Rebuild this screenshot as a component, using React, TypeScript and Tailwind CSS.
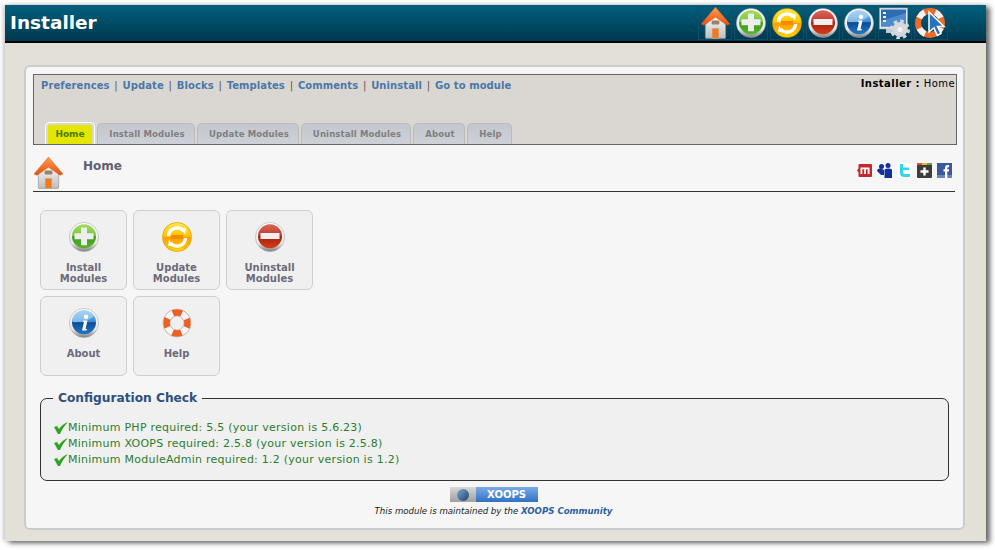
const font = { fontFamily: '"DejaVu Sans", Verdana, sans-serif' };

const links = ["Preferences", "Update", "Blocks", "Templates", "Comments", "Uninstall", "Go to module"];
const tabs = [
  { label: "Install Modules", w: "w-[98px]" },
  { label: "Update Modules", w: "w-[102px]" },
  { label: "Uninstall Modules", w: "w-[110px]" },
  { label: "About", w: "w-[52px]" },
  { label: "Help", w: "w-[45px]" },
];
const checks = [
  "Minimum PHP required: 5.5 (your version is 5.6.23)",
  "Minimum XOOPS required: 2.5.8 (your version is 2.5.8)",
  "Minimum ModuleAdmin required: 1.2 (your version is 1.2)",
];

type Kind = "plus" | "refresh" | "minus" | "info";

const palette: Record<Kind, [string, string, string, string]> = {
  plus: ["#a6dc5e", "#79c63c", "#3f9a1c", "#58b52a"],
  refresh: ["#ffe94a", "#ffc400", "#ff9c00", "#ffd400"],
  minus: ["#d8665a", "#c23a2c", "#a5200f", "#d83c18"],
  info: ["#8cc4ef", "#3a8ad0", "#0f4c94", "#1f78c8"],
};

function RoundIcon({ kind, size = 30 }: { kind: Kind; size?: number }) {
  const [a, b, c, d] = palette[kind];
  return (
    <svg width={size} height={size} viewBox="0 0 30 30" className="block">
      <defs>
        <linearGradient id={`ring-${kind}`} x1="0" y1="0" x2="0" y2="1">
          <stop offset="0" stopColor="#ffffff" />
          <stop offset="0.72" stopColor="#e8e8e8" />
          <stop offset="1" stopColor="#7c7c7c" />
        </linearGradient>
        <linearGradient id={`fill-${kind}`} x1="0" y1="0" x2="0" y2="1">
          <stop offset="0" stopColor={a} />
          <stop offset="0.48" stopColor={b} />
          <stop offset="0.52" stopColor={c} />
          <stop offset="1" stopColor={d} />
        </linearGradient>
      </defs>
      {kind === "refresh" ? (
        <>
          <circle cx="15" cy="15" r="14.8" fill="#dca400" />
          <circle cx="15" cy="15" r="14" fill={`url(#fill-${kind})`} />
          <path d="M6.500 14a8.500 8.500 0 0 1 15-5" fill="none" stroke="#fff" strokeWidth="3.400" />
          <path d="M23.500 16a8.500 8.500 0 0 1-15 5" fill="none" stroke="#fff" strokeWidth="3.400" />
          <path d="M18.500 5.500l5.500 1-1 6z M11.500 24.500l-5.500-1 1-6z" fill="#fff" />
          <rect x="9" y="13" width="12" height="4" fill="#f48a00" />
        </>
      ) : (
        <>
          <circle cx="15" cy="15" r="14.600" fill={`url(#ring-${kind})`} stroke="#a0a0a0" strokeWidth="0.500" />
          <circle cx="15" cy="14.200" r="12" fill={`url(#fill-${kind})`} />
          {kind === "plus" && <path d="M12 5.500h6v5.700h6.500v6H18v6h-6v-6H5.500v-6H12z" fill="#eeeeee" />}
          {kind === "minus" && <rect x="5.500" y="11" width="19" height="6" fill="#f0f0f0" />}
          {kind === "info" && (
            <>
              <path d="M4 14a11 9 0 0 1 21-6 22 13 0 0 1-21 6z" fill="#bfe0f8" opacity="0.55" />
              <path d="M14.500 12.500h4l-2 8.500h1.500l-.5 1.500h-4.500l2-8.500H13.500z" fill="#fff" />
              <circle cx="17" cy="8.800" r="2.200" fill="#fff" />
            </>
          )}
        </>
      )}
    </svg>
  );
}

function HomeIcon({ size = 30 }: { size?: number }) {
  return (
    <svg width={size} height={size * 1.1} viewBox="0 0 30 33" className="block">
      <defs>
        <linearGradient id="roof" x1="0" y1="0" x2="0" y2="1">
          <stop offset="0" stopColor="#ff9d52" />
          <stop offset="1" stopColor="#e4500c" />
        </linearGradient>
        <linearGradient id="wall" x1="0" y1="0" x2="0" y2="1">
          <stop offset="0" stopColor="#fafafa" />
          <stop offset="1" stopColor="#bdbdbd" />
        </linearGradient>
      </defs>
      <path d="M4.500 17L15 9l10.500 8v14.500a1 1 0 0 1-1 1h-19a1 1 0 0 1-1-1z" fill="url(#wall)" stroke="#8c8c8c" strokeWidth="0.600" />
      <path d="M15 0L30 17.500 27 19 15 10.500 3 19 0 17.500z" fill="url(#roof)" stroke="#c9500f" strokeWidth="0.400" />
      <rect x="11.500" y="22" width="7" height="10.500" fill="#ef7a20" stroke="#b9b9b9" strokeWidth="0.500" />
      <rect x="11" y="14" width="8" height="4" rx="1" fill="#9c8068" />
    </svg>
  );
}

function BuoyIcon() {
  return (
    <svg width="30" height="30" viewBox="0 0 30 30" className="block">
      <circle cx="15" cy="15" r="10.500" fill="none" stroke="#ee5f22" strokeWidth="6.500" />
      <circle
        cx="15"
        cy="15"
        r="10.500"
        fill="none"
        stroke="#f6f6f6"
        strokeWidth="6.500"
        strokeDasharray="7.500 8.990"
        transform="rotate(24.500 15 15)"
      />
      <circle cx="15" cy="15" r="14" fill="none" stroke="#a89a90" strokeWidth="0.500" />
      <circle cx="15" cy="15" r="7" fill="none" stroke="#a89a90" strokeWidth="0.500" />
    </svg>
  );
}

function MonitorGearIcon() {
  return (
    <svg width="32" height="32" viewBox="0 0 32 32" className="block">
      <rect x="0.500" y="1" width="28" height="21" fill="#e4e8ee" stroke="#9aa4b0" strokeWidth="0.600" />
      <rect x="2" y="2.500" width="25" height="17" fill="#2c6cb0" />
      <path d="M2 14l25-8v13.500H2z" fill="#4d8ccc" />
      <rect x="4" y="5" width="3" height="2" fill="#e8f0f8" />
      <rect x="4" y="9" width="3" height="2" fill="#e8f0f8" />
      <rect x="4" y="13" width="3" height="2" fill="#e8f0f8" />
      <rect x="7" y="22" width="10" height="4" fill="#c6ccd2" />
      <circle cx="21" cy="22.500" r="7.500" fill="#d6d9dc" />
      <circle cx="21" cy="22.500" r="8.500" fill="none" stroke="#d6d9dc" strokeWidth="3" strokeDasharray="3.500 3.170" />
      <circle cx="21" cy="22.500" r="2.500" fill="#f4f4f4" />
    </svg>
  );
}

function BuoyCursorIcon() {
  return (
    <svg width="32" height="32" viewBox="0 0 32 32" className="block">
      <circle cx="15" cy="16" r="12" fill="none" stroke="#ee6a2a" strokeWidth="6" />
      <circle
        cx="15"
        cy="16"
        r="12"
        fill="none"
        stroke="#f2f2f2"
        strokeWidth="6"
        strokeDasharray="8 10.850"
        transform="rotate(24 15 16)"
      />
      <path d="M14 5v20l5-4 3.500 7.500 3.500-2-3.500-7h6.500z" fill="#2a72c0" stroke="#fff" strokeWidth="1.500" />
    </svg>
  );
}

function SocialIcons() {
  return (
    <div className="flex items-center gap-[5px]">
      <svg width="15" height="15" viewBox="0 0 15 15" className="block">
        <path d="M0 7.500L1.500 5.500V2a1 1 0 0 1 1-1H14a1 1 0 0 1 1 1v11a1 1 0 0 1-1 1H2.500a1 1 0 0 1-1-1V9.500z" fill="#c4282f" />
        <path d="M3.500 4.500h9V11h-1.800V6.300H9V11H7.200V6.300H5.300V11H3.500z" fill="#fff" />
      </svg>
      <svg width="15" height="15" viewBox="0 0 15 15" className="block">
        <circle cx="11" cy="2.500" r="2.500" fill="#142f9a" />
        <circle cx="4.500" cy="3.500" r="2.500" fill="#142f9a" />
        <path d="M7.500 15V6.500c2-1.500 5.500-1.500 7.500 0V15z M0 8c0-2 2-2.500 4-2.500l3 1.500v5H4L2 10z" fill="#142f9a" />
      </svg>
      <svg width="15" height="15" viewBox="0 0 15 15" className="block bg-white">
        <path d="M3 1h3v3.500h6V7H6v2.500c0 1 1 1.500 2 1.500h5v3H7c-2.500 0-4-1.500-4-4z" fill="#33d4f2" />
      </svg>
      <svg width="15" height="15" viewBox="0 0 15 15" className="block">
        <rect width="15" height="15" rx="1" fill="#3d3d3d" />
        <rect x="0" y="0" width="5" height="2" fill="#d9503f" />
        <rect x="5" y="0" width="5" height="2" fill="#e8b82e" />
        <rect x="10" y="0" width="5" height="2" fill="#57a84a" />
        <path d="M6.300 4.500h2.400v2.800h2.800v2.400H8.700v2.800H6.300V9.700H3.500V7.300h2.800z" fill="#fff" />
      </svg>
      <svg width="15" height="15" viewBox="0 0 15 15" className="block">
        <rect width="15" height="15" fill="#3b5a9c" />
        <rect y="12" width="15" height="3" fill="#6d84b4" />
        <path d="M8 15V8.500H6.500V6.300H8V4.800C8 3 9 2 10.600 2h1.500v2.200h-1c-.6 0-.8.300-.8.800v1.300h1.800l-.3 2.200h-1.500V15z" fill="#fff" />
      </svg>
    </div>
  );
}

function Check() {
  return (
    <svg width="14" height="12" viewBox="0 0 14 12" className="block shrink-0">
      <path d="M0 5l3-1 2 3c2-3 5-5.500 9-7-3 3-6 7-8 12H4z" fill="#2fa51f" />
    </svg>
  );
}

function ModuleButton({ icon, lines }: { icon: React.ReactNode; lines: string[] }) {
  return (
    <div className="flex h-[80px] w-[87px] flex-col items-center rounded-[6px] border border-[#cfcfcf] bg-[#f0f0f0] pt-[11px] text-[10px] font-bold leading-[11px] text-[#6b6b7a]">
      {icon}
      <div className="mt-[10px] text-center">
        {lines.map((line) => (
          <div key={line}>{line}</div>
        ))}
      </div>
    </div>
  );
}

export default function App() {
  return (
    <div className="h-[550px] w-[995px] overflow-hidden bg-white pl-[5px] pt-[5px]" style={font}>
      <div className="h-[536px] w-[981px] bg-[#e3e0d7] shadow-[4px_2px_5px_#666,-2px_0_4px_#ccc]">
        <header className="flex h-[38px] items-center justify-between border-b-2 border-black bg-gradient-to-b from-[#01607f] to-[#00394f] pl-[5px] pr-[38px]">
          <h1 className="text-[18.5px] font-bold leading-none text-white">Installer</h1>
          <div className="flex gap-[2px]">
            {[
              <HomeIcon key="h" size={29} />,
              <RoundIcon key="p" kind="plus" />,
              <RoundIcon key="r" kind="refresh" />,
              <RoundIcon key="m" kind="minus" />,
              <RoundIcon key="i" kind="info" />,
              <MonitorGearIcon key="g" />,
              <BuoyCursorIcon key="c" />,
            ].map((icon) => (
              <div key={icon.key} className="flex h-[34px] w-[34px] items-center justify-center border border-[#0c4f68]">
                {icon}
              </div>
            ))}
          </div>
        </header>

        <div className="px-[19px] pt-[22px]">
          <main className="h-[465px] w-[941px] rounded-[6px] border-2 border-[#cccccc] bg-[#f6f6f6] px-[7px] pt-[7px]">
            <div className="flex h-[71px] w-[924px] flex-col justify-between border border-[#666666] bg-[#dad7d2]">
              <div className="flex justify-between pl-[7px] pr-px pt-[3px]">
                <div className="mt-px text-[10px] font-bold leading-[14px] tracking-[0.08px] text-[#4a78a8]">
                  {links.map((link, i) => (
                    <span key={link}>
                      {i > 0 && <span className="mx-[1.5px] font-normal text-[#555]"> | </span>}
                      {link}
                    </span>
                  ))}
                </div>
                <div className="text-[10px] leading-[12px] tracking-[0.45px] text-black">
                  <b>Installer :</b> Home
                </div>
              </div>
              <div className="flex items-end gap-[2px] pl-[11px]">
                <div className="flex h-[22px] w-[50px] rounded-t-[5px] border-x border-t border-white p-[2px] pb-0">
                  <div className="flex w-full items-center justify-center bg-[#e3e600] text-[9px] font-bold text-[#4c7a00]">
                    Home
                  </div>
                </div>
                {tabs.map((tab) => (
                  <div
                    key={tab.label}
                    className={`flex h-[21px] items-center justify-center rounded-t-[5px] border-x border-t border-[#bbbbbb] bg-gradient-to-b from-[#c4c7cd] to-[#cdd0d6] pl-[2px] text-[8.5px] font-bold tracking-[0.15px] text-[#7f7f7f] ${tab.w}`}
                  >
                    {tab.label}
                  </div>
                ))}
              </div>
            </div>

            <div className="relative flex h-[47px] w-[922px] border-b border-[#333333] pl-px pt-[12px]">
              <HomeIcon size={29} />
              <div className="ml-[20px] text-[12px] font-bold leading-[18px] text-[#5f5f6e]">Home</div>
              <div className="ml-auto mr-[3px] mt-[6px]">
                <SocialIcons />
              </div>
            </div>

            <div className="grid w-fit grid-cols-[87px_87px_87px] gap-[6px] pl-[7px] pt-[18px]">
              <ModuleButton icon={<RoundIcon kind="plus" />} lines={["Install", "Modules"]} />
              <ModuleButton icon={<RoundIcon kind="refresh" />} lines={["Update", "Modules"]} />
              <ModuleButton icon={<RoundIcon kind="minus" />} lines={["Uninstall", "Modules"]} />
              <ModuleButton icon={<RoundIcon kind="info" />} lines={["About"]} />
              <ModuleButton icon={<BuoyIcon />} lines={["Help"]} />
            </div>

            <fieldset className="ml-[7px] mt-[14px] h-[91px] w-[909px] rounded-[7px] border border-[#333333] bg-[#f0f0f0] pl-[13px] pt-[14px]">
              <legend className="ml-[-1px] px-[5px] text-[12.2px] font-bold leading-[16px] text-[#2f4f7f]">
                Configuration Check
              </legend>
              {checks.map((line) => (
                <div key={line} className="flex h-[16px] items-center text-[11px] tracking-[0.25px] text-[#2e7d2e]">
                  <Check />
                  <span>{line}</span>
                </div>
              ))}
            </fieldset>

            <div className="mt-[6px] flex flex-col items-center pr-[2px]">
              <div className="flex h-[15px] w-[88px]">
                <div className="flex w-[26px] items-center justify-center bg-gradient-to-b from-[#d8d8d8] to-[#a0a0a0]">
                  <div className="h-[12px] w-[12px] rounded-full bg-gradient-to-br from-[#7fa8d0] to-[#1c4470]" />
                </div>
                <div className="flex flex-1 items-center justify-center bg-gradient-to-b from-[#7aaae6] to-[#2f72c4] text-[10px] font-bold text-white">
                  XOOPS
                </div>
              </div>
              <div className="mt-[3px] text-[8.6px] italic leading-[12px] text-[#222]">
                This module is maintained by the <b className="font-bold text-[#2f5f9f]">XOOPS Community</b>
              </div>
            </div>
          </main>
        </div>
      </div>
    </div>
  );
}
